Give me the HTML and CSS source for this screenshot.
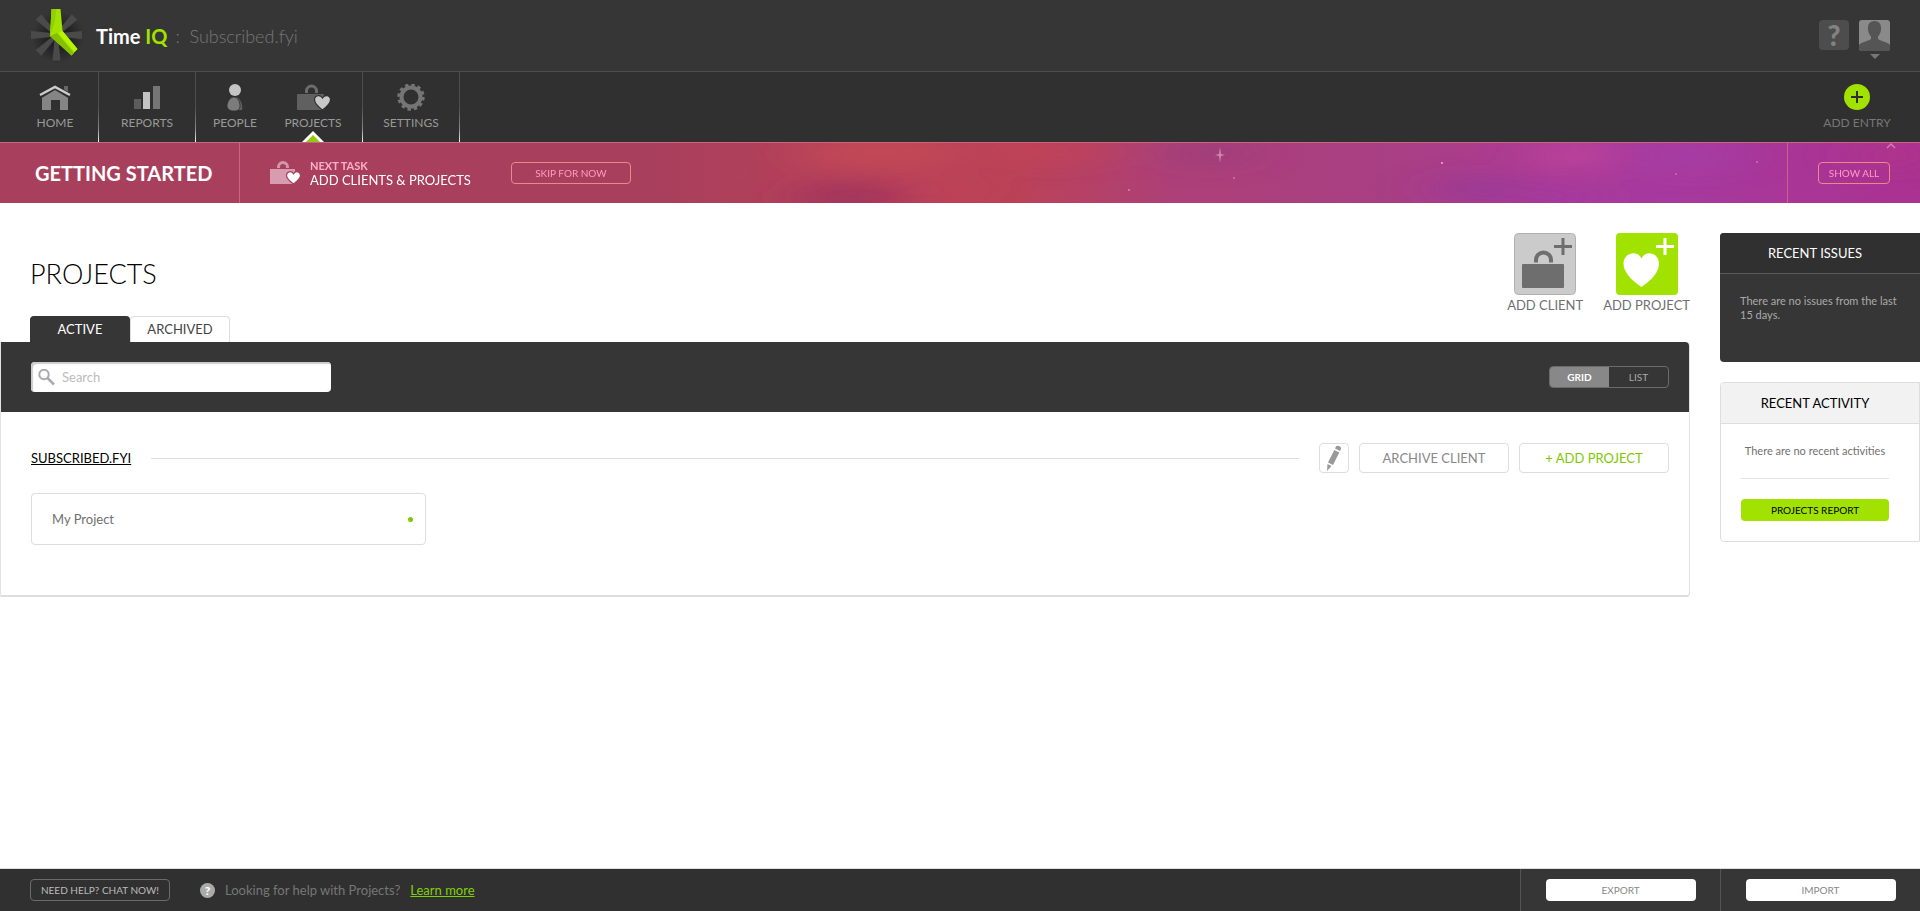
FILE: index.html
```html
<!DOCTYPE html>
<html lang="en">
<head>
    <meta charset="UTF-8">
    <meta name="viewport" content="width=device-width, initial-scale=1.0">
    <title>Projects - Time IQ</title>
    <link rel="stylesheet" href="styles.css">
</head>
<body>

    <header class="topbar">
        <a class="brand" href="#">
            <svg class="logo" viewBox="0 0 54 56" width="54" height="56" aria-hidden="true">
                <defs>
                    <path id="spoke" d="M-4-25.500h8l-2 21h-4z"/>
                    <radialGradient id="shade">
                        <stop offset=".3" stop-color="#1c1c1c"/>
                        <stop offset="1" stop-color="#1c1c1c" stop-opacity="0"/>
                    </radialGradient>
                </defs>
                <circle cx="28" cy="29" r="26" fill="url(#shade)"/>
                <g fill="#4a4a4a" transform="translate(26.500 27)">
                    <use href="#spoke" transform="rotate(45)"/>
                    <use href="#spoke" transform="rotate(90)"/>
                    <use href="#spoke" transform="rotate(180)"/>
                    <use href="#spoke" transform="rotate(225)"/>
                    <use href="#spoke" transform="rotate(270)"/>
                    <use href="#spoke" transform="rotate(315)"/>
                </g>
                <path fill="#a2e200" d="M21.500 1h9l2 22 15 18-6 6.500L20 28z"/>
                <path fill="#93d000" d="M21.500 1h5l-2 14L20 28z"/>
                <path fill="#86bf00" d="M20 28l7-3 17 20-2.500 2.500z"/>
                <path fill="#b4f507" d="M32.500 23l-4 2 16 19 3-3z"/>
            </svg>
            <span class="brand-name">Time <em>IQ</em></span>
            <span class="brand-account">:&nbsp; Subscribed.fyi</span>
        </a>
        <div class="topbar-tools">
            <button class="help-button" type="button" aria-label="Help">?</button>
            <button class="user-button" type="button" aria-label="Account">
                <svg viewBox="0 0 31 39" width="31" height="39">
                    <rect width="31" height="31" rx="3" fill="#8a8a8a"/>
                    <path fill="#555" d="M15.500 1c5 0 7 4 6.500 8.500-.3 3-1.500 5.500-3 7V19c3 2.500 9 2.500 12 6v3a3 3 0 0 1-3 3H3a3 3 0 0 1-3-3v-3c3-3.500 9-3.500 12-6v-2.500c-1.500-1.500-2.700-4-3-7C8.500 5 10.500 1 15.500 1z"/>
                    <path fill="#777" d="M11 34h10l-5 5z"/>
                </svg>
            </button>
        </div>
    </header>

    <nav class="nav">
        <div class="nav-group nav-group-home">
            <a class="nav-item" href="#">
                <svg viewBox="0 0 32 28" width="32" height="28">
                    <path fill="#666" d="M25 2h4v8l-4-4z"/>
                    <path fill="#858585" d="M3 13L16 5l13 8v13h-8V16h-9v10H3z"/>
                    <path fill="none" stroke="#2f2f2f" stroke-width="5" d="M1 12L16 3l15 9"/>
                    <path fill="none" stroke="#ccc" stroke-width="2.500" d="M1 11L16 3l15 8"/>
                </svg>
                Home
            </a>
        </div>
        <div class="nav-group">
            <a class="nav-item" href="#">
                <svg viewBox="0 0 26 28" width="26" height="28">
                    <rect x="0" y="15" width="7" height="10" fill="#5c5c5c"/>
                    <rect x="9" y="8" width="7" height="17" fill="#c4c4c4"/>
                    <rect x="19" y="2" width="7" height="23" fill="#757575"/>
                </svg>
                Reports
            </a>
        </div>
        <div class="nav-group nav-group-pair">
            <a class="nav-item" href="#">
                <svg viewBox="0 0 16 28" width="16" height="28">
                    <path fill="#606060" d="M10 13c4 3 6 8 5 13H9z"/>
                    <path fill="#7c7c7c" stroke="#303030" stroke-width=".8" d="M7 13c4 0 6 5 6 9 0 3-2 5-6 5s-7-2-7-5c0-4 3-9 7-9z"/>
                    <circle cx="8" cy="6" r="6" fill="#c4c4c4"/>
                </svg>
                People
            </a>
            <a class="nav-item active" href="#">
                <svg viewBox="0 0 33 28" width="33" height="28">
                    <path fill="none" stroke="#6c6c6c" stroke-width="3" d="M9.500 9V7a5 5 0 0 1 10 0v2"/>
                    <rect y="10" width="27" height="16" rx="1" fill="#606060"/>
                    <path fill="#c8c8c8" stroke="#303030" stroke-width="1.200" d="M25.500 26c-4-3-8-6.500-8-10.200 0-4.600 5.700-5.600 8-1.800 2.300-3.800 8-2.800 8 1.800 0 3.700-4 7.200-8 10.200z"/>
                </svg>
                Projects
            </a>
        </div>
        <div class="nav-group">
            <a class="nav-item" href="#">
                <svg viewBox="-14 -13 28 28" width="28" height="28">
                    <circle r="9.500" fill="none" stroke="#757575" stroke-width="4"/>
                    <circle r="12.300" fill="none" stroke="#757575" stroke-width="2.800" stroke-dasharray="3.400 3.040"/>
                </svg>
                Settings
            </a>
        </div>
        <a class="nav-item add-entry" href="#">
            <svg viewBox="0 0 28 28" width="28" height="28">
                <circle cx="14" cy="13" r="13" fill="#a2e200"/>
                <path stroke="#303030" stroke-width="2" d="M8 13h12M14 7v12"/>
            </svg>
            Add Entry
        </a>
    </nav>

    <section class="banner">
        <svg class="nebula" viewBox="0 0 1920 60" preserveAspectRatio="none" aria-hidden="true">
            <defs>
                <linearGradient id="sky">
                    <stop offset="0" stop-color="#a83f5d"/>
                    <stop offset=".34" stop-color="#a83f5d"/>
                    <stop offset=".44" stop-color="#b84259"/>
                    <stop offset=".53" stop-color="#bb4258"/>
                    <stop offset=".61" stop-color="#ad4078"/>
                    <stop offset=".72" stop-color="#a93f83"/>
                    <stop offset=".81" stop-color="#ad3b95"/>
                    <stop offset=".86" stop-color="#a73a9f"/>
                    <stop offset="1" stop-color="#aa3290"/>
                </linearGradient>
                <filter id="cloud" x="-50%" y="-80%" width="200%" height="260%">
                    <feGaussianBlur stdDeviation="26 10"/>
                </filter>
            </defs>
            <rect width="1920" height="60" fill="url(#sky)"/>
            <g filter="url(#cloud)">
                <ellipse cx="880" cy="10" rx="80" ry="14" fill="#c94c55" opacity=".7"/>
                <ellipse cx="1050" cy="8" rx="60" ry="12" fill="#c54455" opacity=".7"/>
                <ellipse cx="940" cy="46" rx="40" ry="12" fill="#c54455" opacity=".5"/>
                <ellipse cx="850" cy="54" rx="60" ry="14" fill="#9b2f5e" opacity=".8"/>
                <ellipse cx="1210" cy="10" rx="40" ry="12" fill="#963a7b" opacity=".7"/>
                <ellipse cx="1480" cy="46" rx="50" ry="12" fill="#92389a" opacity=".7"/>
                <ellipse cx="1575" cy="12" rx="40" ry="12" fill="#c2479c" opacity=".8"/>
                <ellipse cx="1695" cy="14" rx="40" ry="16" fill="#a53fa8" opacity=".8"/>
                <ellipse cx="1560" cy="54" rx="40" ry="12" fill="#a038a5" opacity=".7"/>
                <ellipse cx="1890" cy="12" rx="30" ry="14" fill="#b3328a" opacity=".8"/>
            </g>
            <g fill="#f0b5cf">
                <path d="M1220 4l1 7 4 1-4 1-1 7-1-7-4-1 4-1z" opacity=".6"/>
                <circle cx="1442" cy="20" r="1"/>
                <circle cx="1129" cy="47" r="1" opacity=".6"/>
                <circle cx="1234" cy="35" r="1" opacity=".5"/>
                <circle cx="1757" cy="19" r="1" opacity=".5"/>
                <circle cx="1676" cy="31" r="1" opacity=".4"/>
            </g>
            <path fill="none" stroke="#d678b4" stroke-width="1.500" d="M1887 5l4-4 4 4"/>
        </svg>
        <h2 class="banner-title">Getting Started</h2>
        <div class="banner-task">
            <svg viewBox="0 0 31 24" width="31" height="24" aria-hidden="true">
                <path fill="none" stroke="#d396ab" stroke-width="3" d="M8.500 7V6a4.500 4.500 0 0 1 9 0v1"/>
                <rect y="8" width="25" height="15" fill="#d79cb0"/>
                <path fill="#fff" stroke="#a83f5d" stroke-width="1.200" d="M23.500 23c-4-3-7-5.500-7-8.500 0-4.300 5-5 7-1.700 2-3.300 7-2.600 7 1.700 0 3-3 5.500-7 8.500z"/>
            </svg>
            <p><strong>Next Task</strong>Add Clients &amp; Projects</p>
            <button class="banner-button skip" type="button">Skip for now</button>
        </div>
        <div class="banner-end">
            <button class="banner-button" type="button">Show All</button>
        </div>
    </section>

    <div class="content">
        <main class="main">
            <div class="page-head">
                <h1>Projects</h1>
                <a class="action" href="#">
                    <svg viewBox="0 0 62 62" width="62" height="62">
                        <rect x=".5" y=".5" width="61" height="61" rx="4" fill="#cbcbcb" stroke="#b0b0b0"/>
                        <path fill="none" stroke="#6e6e6e" stroke-width="4" d="M22 29.500V27a7.500 7.500 0 0 1 15 0v2.500"/>
                        <rect x="8" y="31" width="42" height="24" rx="1" fill="#6e6e6e"/>
                        <path stroke="#6e6e6e" stroke-width="3" d="M40 13.500h18M49 5v17"/>
                    </svg>
                    Add Client
                </a>
                <a class="action" href="#">
                    <svg viewBox="0 0 62 62" width="62" height="62">
                        <rect width="62" height="62" rx="4" fill="#a2e200"/>
                        <path fill="#fff" d="M25.500 54C15 47 7.500 39 7.500 30.500c0-10.500 14-14 18-5 4-9 17.500-5.500 17.500 5C43 39 36 47 25.500 54z"/>
                        <path stroke="#fff" stroke-width="3" d="M40 13.500h18M49 5v17"/>
                    </svg>
                    Add Project
                </a>
            </div>

            <div class="tabs">
                <a class="tab active" href="#">Active</a>
                <a class="tab" href="#">Archived</a>
            </div>

            <div class="panel">
                <div class="toolbar">
                    <div class="search">
                        <svg viewBox="0 0 17 17" width="17" height="17" aria-hidden="true">
                            <circle cx="6" cy="5.500" r="4.700" fill="none" stroke="#aaa" stroke-width="2"/>
                            <path stroke="#aaa" stroke-width="2.500" d="M9.500 9l6.500 6.500"/>
                        </svg>
                        <input type="text" placeholder="Search" aria-label="Search">
                    </div>
                    <div class="view-toggle">
                        <button class="selected" type="button">Grid</button>
                        <button type="button">List</button>
                    </div>
                </div>

                <div class="client">
                    <div class="client-head">
                        <a class="client-name" href="#">Subscribed.fyi</a>
                        <span class="line"></span>
                        <div class="client-buttons">
                            <button class="btn btn-icon" type="button" aria-label="Edit client">
                                <svg viewBox="0 0 14 26" width="14" height="26">
                                    <path fill="#999" d="M9 1.500c1-2 6 0 5 2.500l-1 2-5-2.500zM7.300 5l5 2.500L6 20l-5-2.500zM.5 19l4 2L0 26z"/>
                                </svg>
                            </button>
                            <button class="btn" type="button">Archive Client</button>
                            <button class="btn btn-add" type="button">+ Add Project</button>
                        </div>
                    </div>
                    <a class="project" href="#">My Project <span class="dot"></span></a>
                </div>
            </div>
        </main>

        <aside class="sidebar">
            <section class="box box-dark">
                <h3>Recent Issues</h3>
                <p>There are no issues from the last 15 days.</p>
            </section>
            <section class="box box-light">
                <h3>Recent Activity</h3>
                <div class="box-body">
                    <p>There are no recent activities</p>
                    <button class="report" type="button">Projects Report</button>
                </div>
            </section>
        </aside>
    </div>

    <footer class="footer">
        <div class="footer-help">
            <button class="chat" type="button">Need help? Chat now!</button>
            <span class="help-dot">?</span>
            <span>Looking for help with Projects?</span>
            <a href="#">Learn more</a>
        </div>
        <div class="footer-cell"><button type="button">Export</button></div>
        <div class="footer-cell"><button type="button">Import</button></div>
    </footer>

</body>
</html>
```
FILE: styles.css
```css
* {
    box-sizing: border-box;
}

body {
    margin: 0;
    min-height: 100vh;
    display: flex;
    flex-direction: column;
    font-family: Lato, "Liberation Sans", sans-serif;
    font-size: 13px;
    line-height: 16px;
    color: #707070;
    background: #fff;
}

h1, h2, h3, p {
    margin: 0;
    font-weight: normal;
}

a {
    color: inherit;
    text-decoration: none;
}

button {
    font-family: inherit;
    font-size: 10px;
    text-transform: uppercase;
    padding: 0;
    border: none;
    background: none;
    cursor: pointer;
}

svg {
    display: block;
}

/* Top bar */
.topbar {
    height: 72px;
    padding: 0 30px;
    display: flex;
    align-items: center;
    justify-content: space-between;
    background: #363636;
    border-bottom: 1px solid #4d4d4d;
}

.brand {
    display: flex;
    align-items: center;
}

.logo {
    margin-right: 12px;
}

.brand-name {
    font-size: 20px;
    font-weight: bold;
    color: #fff;
}

.brand-name em {
    font-style: normal;
    color: #a2e200;
}

.brand-account {
    margin-left: 8px;
    font-size: 18px;
    font-weight: 300;
    color: #777;
}

.topbar-tools {
    display: flex;
    align-items: flex-start;
    gap: 10px;
}

.help-button {
    width: 30px;
    height: 30px;
    border-radius: 4px;
    background: #4d4d4d;
    color: #828282;
    font-size: 28px;
    font-weight: 900;
    line-height: 30px;
}

.user-button {
    height: 31px;
}

/* Navigation */
.nav {
    height: 70px;
    display: flex;
    background: #303030;
}

.nav-group {
    display: flex;
    padding: 0 9px;
    border-right: 1px solid;
    border-image: linear-gradient(#4d4d4d 50%, #888 80%, #fff) 1;
}

.nav-group-home {
    padding: 0 4px 0 16px;
}

.nav-group-pair {
    padding: 0 10px 0 0;
}

.nav-item {
    position: relative;
    width: 78px;
    padding-top: 12px;
    display: flex;
    flex-direction: column;
    align-items: center;
    gap: 3px;
    font-size: 12px;
    text-transform: uppercase;
    color: #999;
}

.nav-item.active::after {
    content: "";
    position: absolute;
    bottom: 0;
    border: 11px solid transparent;
    border-top: 0;
    border-bottom-color: #fff;
}

.nav-item.active::before {
    content: "";
    position: absolute;
    z-index: 1;
    bottom: 0;
    border: 7px solid transparent;
    border-top: 0;
    border-bottom-color: #8fcb0c;
}

.add-entry {
    margin-left: auto;
    margin-right: 24px;
    color: #777;
}

/* Getting started banner */
.banner {
    position: relative;
    height: 61px;
    display: flex;
    border-top: 1px solid #c9657f;
    background: #a83f5d;
    color: #fff;
    text-transform: uppercase;
}

.nebula {
    position: absolute;
    inset: 0;
    width: 100%;
    height: 100%;
}

.banner-title,
.banner-task,
.banner-end {
    position: relative;
    display: flex;
    align-items: center;
}

.banner-title {
    width: 240px;
    padding-left: 35px;
    border-right: 1px solid #c9657f;
    font-size: 20px;
    font-weight: bold;
}

.banner-task {
    flex: 1;
    padding-left: 30px;
}

.banner-task p {
    margin: 0 40px 0 9px;
    line-height: 14px;
}

.banner-task strong {
    display: block;
    font-size: 11px;
    color: #ffb0c8;
}

.banner-button {
    width: 72px;
    height: 22px;
    border: 1px solid #f0868a;
    border-radius: 4px;
    color: #ff9cc0;
}

.banner-button.skip {
    width: 120px;
}

.banner-end {
    padding: 0 30px;
    border-left: 1px solid #c9657f;
}

/* Content */
.content {
    flex: 1;
    display: flex;
    align-items: flex-start;
    gap: 30px;
    padding-top: 30px;
}

.main {
    flex: 1;
}

.page-head {
    display: flex;
    gap: 20px;
    height: 83px;
    padding-left: 30px;
    text-transform: uppercase;
}

.page-head h1 {
    margin-right: auto;
    padding-top: 25px;
    font-size: 27px;
    line-height: 32px;
    font-weight: 300;
    color: #000;
}

.action {
    display: flex;
    flex-direction: column;
    align-items: center;
    gap: 2px;
}

.tabs {
    display: flex;
    padding-left: 30px;
}

.tab {
    width: 100px;
    height: 26px;
    border: 1px solid #ddd;
    border-bottom: none;
    border-radius: 4px 4px 0 0;
    line-height: 24px;
    text-align: center;
    text-transform: uppercase;
    color: #444;
}

.tab.active {
    border-color: #363636;
    background: #363636;
    color: #fff;
}

.panel {
    border: 1px solid #e2e2e2;
    border-top: none;
    border-bottom: 2px solid #ddd;
    border-radius: 0 4px 4px 0;
}

.toolbar {
    height: 70px;
    padding: 0 20px 0 30px;
    display: flex;
    align-items: center;
    justify-content: space-between;
    border-radius: 0 4px 0 0;
    background: #363636;
}

.search {
    width: 300px;
    height: 30px;
    padding-left: 7px;
    display: flex;
    align-items: center;
    gap: 7px;
    border-radius: 4px;
    background: #fff;
    box-shadow: inset 2px 2px 1px #ccc;
}

.search input {
    flex: 1;
    min-width: 0;
    padding: 0;
    border: none;
    outline: none;
    background: none;
    font: inherit;
}

.search input::placeholder {
    color: #bbb;
}

.view-toggle {
    display: flex;
    height: 22px;
    border: 1px solid #6b6b6b;
    border-radius: 4px;
    overflow: hidden;
}

.view-toggle button {
    width: 59px;
    color: #aaa;
}

.view-toggle .selected {
    background: #888;
    color: #fff;
    font-weight: bold;
}

.client {
    padding: 31px 20px 50px 30px;
}

.client-head {
    display: flex;
    align-items: center;
    gap: 20px;
    margin-bottom: 20px;
}

.client-name {
    color: #000;
    text-decoration: underline;
    text-transform: uppercase;
}

.line {
    flex: 1;
    height: 1px;
    background: #ddd;
}

.client-buttons {
    display: flex;
    gap: 10px;
}

.btn {
    width: 150px;
    height: 30px;
    border: 1px solid #ddd;
    border-radius: 4px;
    background: #fff;
    font-size: 13px;
    color: #888;
}

.btn-icon {
    width: 30px;
    display: flex;
    align-items: center;
    justify-content: center;
}

.btn-add {
    color: #80c800;
}

.project {
    width: 395px;
    height: 52px;
    padding: 0 12px 0 20px;
    display: flex;
    align-items: center;
    justify-content: space-between;
    border: 1px solid #ddd;
    border-radius: 4px;
}

.dot {
    width: 5px;
    height: 5px;
    border-radius: 50%;
    background: #80c800;
}

/* Sidebar */
.sidebar {
    width: 200px;
    font-size: 11px;
    line-height: 14px;
}

.box {
    margin-bottom: 20px;
    border-radius: 4px 0 0 4px;
    overflow: hidden;
}

.box h3 {
    height: 41px;
    font-size: 13px;
    line-height: 40px;
    text-align: center;
    text-transform: uppercase;
}

.box-dark {
    height: 129px;
    background: #363636;
    color: #aaa;
}

.box-dark h3 {
    padding-right: 10px;
    border-bottom: 1px solid #5a5a5a;
    background: #303030;
    color: #fff;
}

.box-dark p {
    padding: 20px 20px 0;
}

.box-light {
    border: 1px solid #ddd;
}

.box-light h3 {
    padding-right: 10px;
    border-bottom: 1px solid #ddd;
    background: #f2f2f2;
    color: #000;
}

.box-body {
    padding: 20px 30px 20px 20px;
    text-align: center;
}

.box-body p {
    padding-bottom: 20px;
    border-bottom: 1px solid #e2e2e2;
}

.report {
    width: 100%;
    height: 22px;
    margin-top: 20px;
    border-radius: 4px;
    background: #a2e200;
    color: #000;
}

/* Footer */
.footer {
    height: 43px;
    display: flex;
    border-top: 1px solid #ddd;
    background: #303030;
    color: #777;
}

.footer-help {
    flex: 1;
    display: flex;
    align-items: center;
    gap: 10px;
    padding-left: 30px;
}

.footer-help a {
    color: #80d000;
    text-decoration: underline;
}

.chat {
    width: 140px;
    height: 22px;
    margin-right: 20px;
    border: 1px solid #6b6b6b;
    border-radius: 4px;
    color: #bbb;
}

.help-dot {
    width: 15px;
    height: 15px;
    border-radius: 50%;
    background: #aaa;
    color: #fff;
    font-size: 12px;
    font-weight: 900;
    line-height: 15px;
    text-align: center;
}

.footer-cell {
    width: 200px;
    display: flex;
    align-items: center;
    justify-content: center;
    border-left: 1px solid #555;
    background: #363636;
}

.footer-cell button {
    width: 150px;
    height: 22px;
    border-radius: 4px;
    background: #fff;
    color: #888;
}
```
